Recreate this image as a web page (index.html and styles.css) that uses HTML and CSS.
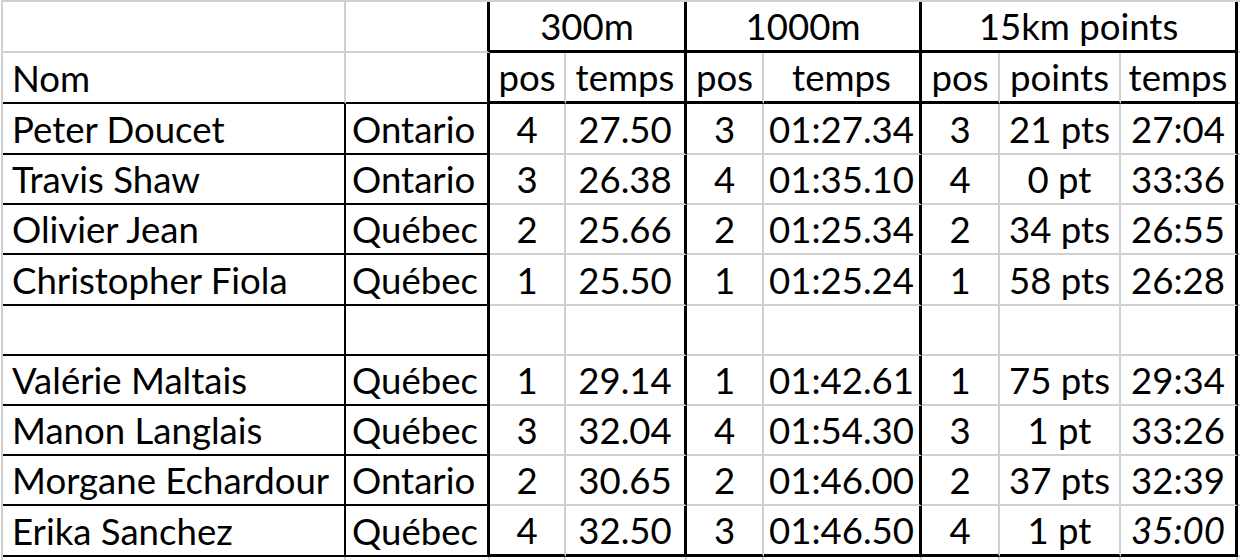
FILE: index.html
```html
<!DOCTYPE html>
<html lang="fr">
<head>
<meta charset="utf-8">
<title>Résultats</title>
<link rel="stylesheet" href="styles.css">
</head>
<body>
<div class="sheet">
  <!-- row 1 -->
  <div class="c"></div>
  <div class="c rb3"></div>
  <div class="c s2 rb3 bb3">300m</div>
  <div class="c s2 rb3 bb3">1000m</div>
  <div class="c s3 rb3 bb3">15km points</div>
  <div class="c"></div>
  <!-- row 2 -->
  <div class="c l bb2">Nom</div>
  <div class="c rb3 bb2"></div>
  <div class="c bb3">pos</div><div class="c rb3 bb3">temps</div>
  <div class="c bb3">pos</div><div class="c rb3 bb3">temps</div>
  <div class="c bb3">pos</div><div class="c bb3">points</div><div class="c rb3 bb3">temps</div>
  <div class="c"></div>
  <!-- data -->
  <div class="c l name">Peter Doucet</div><div class="c l reg">Ontario</div>
  <div class="c">4</div><div class="c rb3">27.50</div>
  <div class="c">3</div><div class="c rb3">01:27.34</div>
  <div class="c">3</div><div class="c">21 pts</div><div class="c rb3">27:04</div>
  <div class="c"></div>

  <div class="c l name">Travis Shaw</div><div class="c l reg">Ontario</div>
  <div class="c">3</div><div class="c rb3">26.38</div>
  <div class="c">4</div><div class="c rb3">01:35.10</div>
  <div class="c">4</div><div class="c">0 pt</div><div class="c rb3">33:36</div>
  <div class="c"></div>

  <div class="c l name">Olivier Jean</div><div class="c l reg">Québec</div>
  <div class="c">2</div><div class="c rb3">25.66</div>
  <div class="c">2</div><div class="c rb3">01:25.34</div>
  <div class="c">2</div><div class="c">34 pts</div><div class="c rb3">26:55</div>
  <div class="c"></div>

  <div class="c l name">Christopher Fiola</div><div class="c l reg">Québec</div>
  <div class="c">1</div><div class="c rb3">25.50</div>
  <div class="c">1</div><div class="c rb3">01:25.24</div>
  <div class="c">1</div><div class="c">58 pts</div><div class="c rb3">26:28</div>
  <div class="c"></div>

  <div class="c l name"></div><div class="c l reg"></div>
  <div class="c"></div><div class="c rb3"></div>
  <div class="c"></div><div class="c rb3"></div>
  <div class="c"></div><div class="c"></div><div class="c rb3"></div>
  <div class="c"></div>

  <div class="c l name">Valérie Maltais</div><div class="c l reg">Québec</div>
  <div class="c">1</div><div class="c rb3">29.14</div>
  <div class="c">1</div><div class="c rb3">01:42.61</div>
  <div class="c">1</div><div class="c">75 pts</div><div class="c rb3">29:34</div>
  <div class="c"></div>

  <div class="c l name">Manon Langlais</div><div class="c l reg">Québec</div>
  <div class="c">3</div><div class="c rb3">32.04</div>
  <div class="c">4</div><div class="c rb3">01:54.30</div>
  <div class="c">3</div><div class="c">1 pt</div><div class="c rb3">33:26</div>
  <div class="c"></div>

  <div class="c l name">Morgane Echardour</div><div class="c l reg">Ontario</div>
  <div class="c">2</div><div class="c rb3">30.65</div>
  <div class="c">2</div><div class="c rb3">01:46.00</div>
  <div class="c">2</div><div class="c">37 pts</div><div class="c rb3">32:39</div>
  <div class="c"></div>

  <div class="c l name">Erika Sanchez</div><div class="c l reg">Québec</div>
  <div class="c bb3">4</div><div class="c rb3 bb3">32.50</div>
  <div class="c bb3">3</div><div class="c rb3 bb3">01:46.50</div>
  <div class="c bb3">4</div><div class="c bb3">1 pt</div><div class="c rb3 bb3 it">35:00</div>
  <div class="c"></div>

  <!-- trailing sheet gridlines -->
  <div class="g"></div><div class="g"></div><div class="g"></div><div class="g"></div><div class="g"></div>
  <div class="g"></div><div class="g"></div><div class="g"></div><div class="g"></div><div class="g"></div>
</div>
</body>
</html>
```
FILE: styles.css
```css
html, body {
  margin: 0;
  padding: 0;
  background: #fff;
  overflow: hidden;
}

.sheet {
  display: grid;
  grid-template-columns: 343px 144px 76px 121px 77px 158px 78px 121px 117px 20px;
  grid-template-rows: 51px 51px 51px 50px 50px 51px 50px 50px 50px 50px 51px 3px;
  width: max-content;
  margin-left: 1px;
  border-top: 2px solid #d0d0d0;
  border-left: 2px solid #d0d0d0;
  font-family: Lato, "Open Sans", sans-serif;
  font-size: 36.6px;
  line-height: 1;
  color: #000;
}

.c {
  box-sizing: border-box;
  display: flex;
  align-items: flex-end;
  justify-content: center;
  padding-bottom: 5px;
  border-right: 2px solid #d0d0d0;
  border-bottom: 2px solid #d0d0d0;
  white-space: nowrap;
  overflow: hidden;
}

.g {
  border-right: 2px solid #d0d0d0;
}

.l {
  justify-content: flex-start;
  padding-left: 9px;
}

.reg {
  padding-left: 6px;
  border-right: 3px solid #000;
  border-bottom: 2px solid #000;
}

.name {
  border-right: 2px solid #000;
  border-bottom: 2px solid #000;
}

.s2 { grid-column: span 2; }
.s3 { grid-column: span 3; }

.rb3 { border-right: 3px solid #000; }
.bb2 { border-bottom: 2px solid #000; }
.bb3 { border-bottom: 3px solid #000; }

.it { font-style: italic; }
```
